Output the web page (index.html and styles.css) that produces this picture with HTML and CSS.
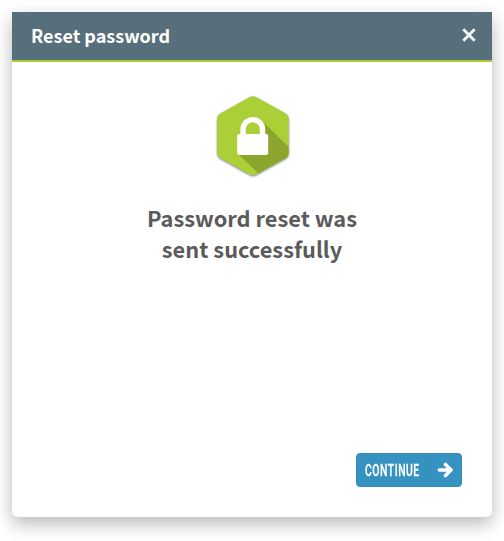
FILE: index.html
```html
<!DOCTYPE html>
<html lang="en">
<head>
<meta charset="utf-8">
<title>Reset password</title>
<link rel="stylesheet" href="styles.css">
</head>
<body>
<section class="dialog">
  <header class="dialog-header">
    <h1 class="dialog-title">Reset password</h1>
    <button class="close" aria-label="Close">
      <svg width="14" height="14" viewBox="0 0 14 14"><path d="M1.300 1.300l11.400 11.400M12.700 1.300L1.300 12.700"/></svg>
    </button>
  </header>
  <main class="dialog-body">
    <svg class="badge" width="80" height="88" viewBox="0 0 80 88">
      <defs>
        <clipPath id="hex"><path id="hexShape" d="M36.500 4.300Q40 2.400 43.500 4.300L72.300 20.300Q75.700 22.300 75.700 26.300V59.200Q75.700 63.200 72.300 65.200L43.500 81.200Q40 83.100 36.500 81.200L7.700 65.200Q4.300 63.200 4.300 59.200V26.300Q4.300 22.300 7.700 20.300Z"/></clipPath>
      </defs>
      <use href="#hexShape" class="hex"/>
      <path class="long-shadow" clip-path="url(#hex)" d="M50 29L84 62V100H66L25 61L50 48Z"/>
      <path class="shackle" d="M30.100 44V36.300a9.700 9.700 0 0 1 19.400 0V44"/>
      <rect class="lock" x="24.200" y="41" width="31" height="21" rx="2"/>
    </svg>
    <p class="message">Password reset was<br>sent successfully</p>
  </main>
  <footer class="dialog-footer">
    <button class="continue">
      <span class="continue-label"><span class="condensed">CONTINUE</span></span>
      <span class="continue-icon"><svg width="16" height="16" viewBox="0 0 16 16"><path d="M2.400 8H13M8.500 2.500L14 8L8.500 13.500"/></svg></span>
    </button>
  </footer>
</section>
</body>
</html>
```

FILE: styles.css
```css
* { box-sizing: border-box; }
body {
  margin: 0;
  padding: 12px;
  height: 541px;
  overflow: hidden;
  background: #fff;
  font-family: "Noto Sans CJK SC", "Noto Sans", sans-serif;
}
button { border: 0; padding: 0; background: none; }
.dialog {
  display: flex;
  flex-direction: column;
  height: 505px;
  background: #fff;
  border-radius: 0 0 6px 6px;
  box-shadow: 0 7px 18px rgba(0, 0, 0, .28);
}
.dialog-header {
  display: flex;
  align-items: center;
  justify-content: space-between;
  height: 50px;
  padding: 0 16px 2px 19px;
  background: #566f7a;
  border-bottom: 2px solid #a9cc35;
}
.dialog-title {
  margin: 0;
  color: #fff;
  font-size: 18px;
  font-weight: 700;
  line-height: 28px;
}
.close { display: flex; }
.close path { fill: none; stroke: #f4f6f7; stroke-width: 2.8; }
.dialog-body {
  display: flex;
  flex: 1;
  flex-direction: column;
  align-items: center;
  padding-top: 31px;
}
.badge { margin-left: 2px; overflow: visible; }
.hex { fill: #abcf37; filter: drop-shadow(0 1px 1px rgba(0, 0, 0, .5)); }
.long-shadow { fill: #8ba62d; }
.shackle { fill: none; stroke: #fff; stroke-width: 5.4; }
.lock { fill: #fff; }
.message {
  margin: 21px 0 0;
  color: #5b5b5b;
  font-size: 21.8px;
  font-weight: 700;
  line-height: 31px;
  text-align: center;
}
.dialog-footer {
  display: flex;
  justify-content: flex-end;
  padding: 0 30px 30px;
}
.continue {
  display: flex;
  width: 106px;
  height: 34px;
  background: #3692c1;
  border: 1px solid #338bb8;
  border-radius: 4px;
  overflow: hidden;
  color: #fff;
}
.continue-label {
  display: flex;
  align-items: center;
  width: 73px;
  padding-left: 8px;
  border-right: 1px solid #3489b5;
}
.condensed {
  font: 500 17px/34px Roboto, sans-serif;
  letter-spacing: .9px;
  transform: scaleX(.61);
  transform-origin: left center;
  -webkit-text-stroke: .3px #fff;
}
.continue-icon { display: flex; flex: 1; align-items: center; justify-content: center; padding-right: 2px; }
.continue-icon path { fill: none; stroke: #fff; stroke-width: 3.6; stroke-linecap: round; }
```
